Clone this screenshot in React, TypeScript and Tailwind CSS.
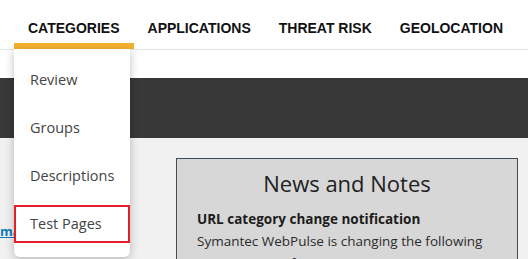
const navItems = ['CATEGORIES', 'APPLICATIONS', 'THREAT RISK', 'GEOLOCATION'];
const menuItems = ['Review', 'Groups', 'Descriptions', 'Test Pages'];

export default function App() {
  return (
    <div className="relative w-[528px] h-[259px] overflow-hidden bg-[#f1f1f1] font-['Open_Sans',sans-serif]">
      <header className="flex h-[50px] border-b border-[#e3e3e3] bg-white pl-[14px]">
        {navItems.map((item, i) => (
          <div
            key={item}
            className="relative flex h-[49px] items-center px-[14px] pt-[8px] font-['Liberation_Sans',Arial,sans-serif] text-[14px] font-bold text-[#111]"
          >
            {item}
            {i === 0 && <div className="absolute bottom-0 left-0 right-0 h-[6px] bg-[#f6b22e]" />}
          </div>
        ))}
      </header>

      <div className="h-[28px] bg-white" />
      <div className="h-[60px] bg-[#383838]" />

      <div className="flex pt-[20px]">
        <div className="w-[176px] pt-[60px]">
          <a href="#" className="text-[13px] font-bold text-[#0b7db8] underline">
            mation
          </a>
        </div>
        <div className="w-[342px] h-[200px] border border-[#3e4d59] bg-[#d7d7d7] px-[20px] pt-[8px]">
          <h2 className="text-center text-[22px] leading-[32px] text-[#222]">News and Notes</h2>
          <div className="mt-[9px] text-[13.5px] leading-[22px] text-[#2b2b2b]">
            <p className="font-bold text-[#1c1c1c]">URL category change notification</p>
            <p>Symantec WebPulse is changing the following categories as of Sep. 8, 2025:</p>
          </div>
        </div>
      </div>

      {/* dropdown */}
      <div className="absolute left-[14px] top-[49px] w-[116px] rounded-b-[6px] bg-white pt-[7px] pb-[9px] shadow-[0_2px_10px_rgba(0,0,0,0.25)]">
        {menuItems.map((item) => (
          <div key={item} className="flex h-12 items-center">
            {item === 'Test Pages' ? (
              <div className="flex h-[38px] w-full items-center border-2 border-[#e3202a] px-[14px] text-[14.5px] text-[#444]">
                {item}
              </div>
            ) : (
              <div className="px-[16px] text-[14.5px] text-[#444]">{item}</div>
            )}
          </div>
        ))}
      </div>
    </div>
  );
}
